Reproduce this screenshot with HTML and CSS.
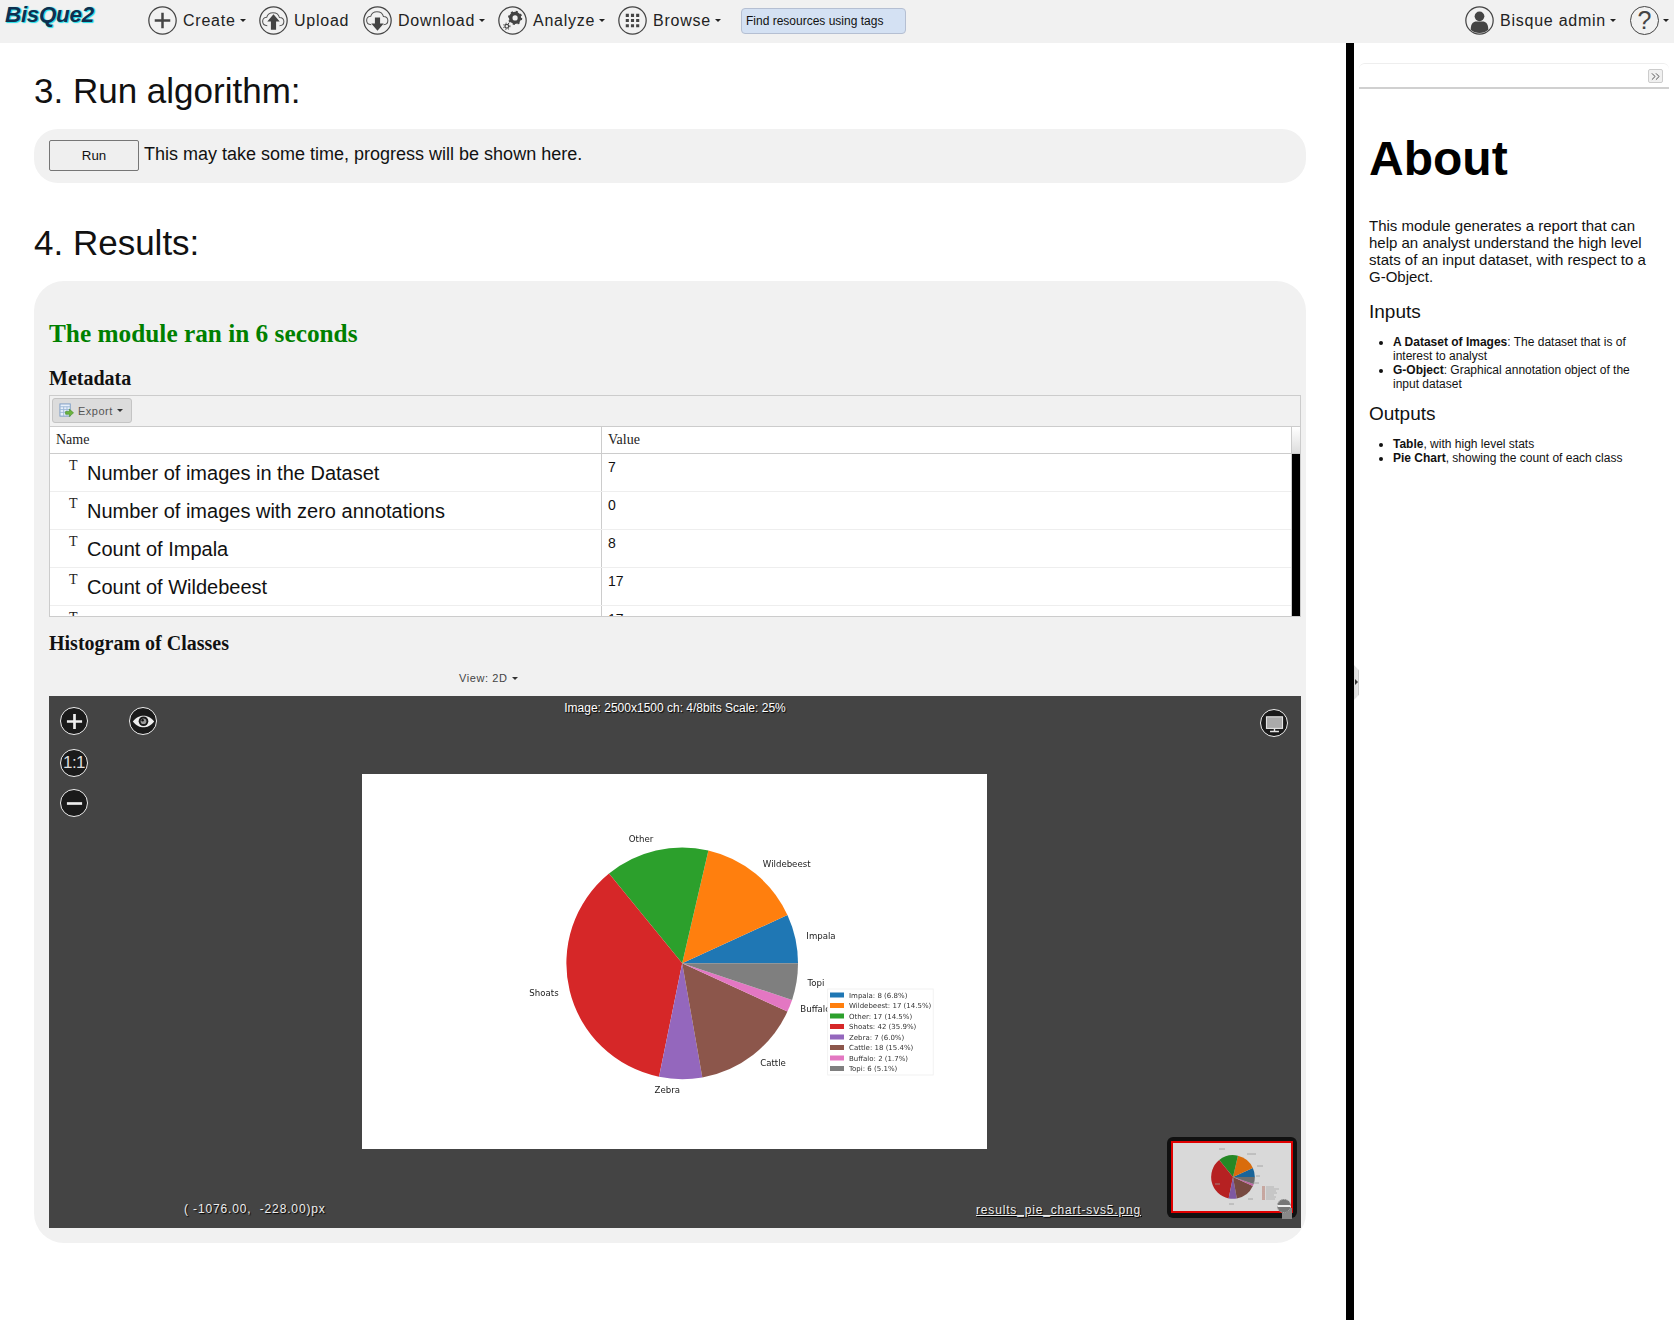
FILE: index.html
```html
<!DOCTYPE html>
<html lang="en">
<head>
<meta charset="utf-8">
<title>BisQue2 - Run algorithm</title>
<link rel="stylesheet" href="styles.css">
</head>
<body>
<header class="topbar">
  <a class="logo">BisQue2</a>
  <nav class="nav">
    <a class="nav-item item-create">
      <svg class="nav-icon" viewBox="0 0 28 28"><circle cx="14" cy="14" r="13.2" class="ring"/><path d="M14 6.500v15M6.500 14h15" class="thick"/></svg>
      <span>Create</span><i class="caret"></i>
    </a>
    <a class="nav-item item-upload">
      <svg class="nav-icon" viewBox="0 0 28 28"><circle cx="14" cy="14" r="13.2" class="ring"/><path d="M8 19c-3 0-4.500-2-4.500-4.200 0-2.300 1.800-4 4-4 .8-2.800 3.300-4.300 6-4.300 3.200 0 5.600 2 6.200 4.600 2.300.1 4.300 1.500 4.300 3.900 0 2.300-1.700 4-4.200 4" class="thin"/><path d="M14 8l6 7h-3.500v8h-5v-8H8z" class="solid"/></svg>
      <span>Upload</span>
    </a>
    <a class="nav-item item-download">
      <svg class="nav-icon" viewBox="0 0 28 28"><circle cx="14" cy="14" r="13.2" class="ring"/><path d="M8 18c-3 0-4.500-2-4.500-4.200 0-2.300 1.800-4 4-4 .8-2.800 3.300-4.300 6-4.300 3.200 0 5.600 2 6.200 4.600 2.300.1 4.300 1.500 4.300 3.900 0 2.300-1.700 4-4.200 4" class="thin"/><path d="M14 24l6-7h-3.500v-6h-5v6H8z" class="solid"/></svg>
      <span>Download</span><i class="caret"></i>
    </a>
    <a class="nav-item item-analyze">
      <svg class="nav-icon" viewBox="0 0 28 28"><circle cx="14" cy="14" r="13.2" class="ring"/><circle cx="16.500" cy="11.500" r="4.200" class="gear"/><circle cx="16.500" cy="11.500" r="6" class="gear-teeth"/><circle cx="8.500" cy="19.500" r="1.800" class="gear-small"/><circle cx="8.500" cy="19.500" r="3" class="gear-teeth-small"/></svg>
      <span>Analyze</span><i class="caret"></i>
    </a>
    <a class="nav-item item-browse">
      <svg class="nav-icon" viewBox="0 0 28 28"><circle cx="14" cy="14" r="13.2" class="ring"/><path d="M7.500 7.500h3v3h-3zM12.500 7.500h3v3h-3zM17.500 7.500h3v3h-3zM7.500 12.500h3v3h-3zM12.500 12.500h3v3h-3zM17.500 12.500h3v3h-3zM7.500 17.500h3v3h-3zM12.500 17.500h3v3h-3zM17.500 17.500h3v3h-3z" class="solid"/></svg>
      <span>Browse</span><i class="caret"></i>
    </a>
    <div class="search">Find resources using tags</div>
  </nav>
  <div class="nav-right">
    <a class="nav-item item-user">
      <svg class="nav-icon" viewBox="0 0 28 28"><circle cx="14" cy="14" r="13.2" class="ring"/><circle cx="14" cy="10" r="4.700" class="solid"/><path d="M5.500 23c0-6 2.500-8 5.500-8h6c3 0 5.500 2 5.500 8a13 13 0 0 1-17 0z" class="solid"/></svg>
      <span>Bisque admin</span><i class="caret"></i>
    </a>
    <a class="nav-item item-help">
      <span class="help-ring">?</span><i class="caret"></i>
    </a>
  </div>
</header>

<div class="layout">
  <main class="content">
    <h2 class="step step-run">3. Run algorithm:</h2>
    <section class="run-panel">
      <button class="run-btn">Run</button>
      <span class="run-note">This may take some time, progress will be shown here.</span>
    </section>

    <h2 class="step step-results">4. Results:</h2>
    <section class="results-panel">
      <h3 class="success">The module ran in 6 seconds</h3>
      <h4 class="sub sub-meta">Metadata</h4>

      <div class="grid">
        <div class="grid-toolbar">
          <button class="export-btn">
            <svg class="export-icon" viewBox="0 0 16 16"><rect x="1" y="1" width="11" height="13" fill="#e8f0fa" stroke="#7c9cc4"/><path d="M1 4h11M1 7h11M1 10h11M5 4v10M8.500 4v10" stroke="#9db7d6" fill="none"/><path d="M7 9h4V6.500l4.500 4-4.500 4V12H7z" fill="#6cb33f" stroke="#3f8a20" stroke-width=".6"/></svg>
            <span>Export</span><i class="caret caret-dark"></i>
          </button>
        </div>
        <div class="grid-head">
          <div class="cell-head col-name">Name</div>
          <div class="cell-head col-value">Value</div>
          <div class="head-scroll"></div>
        </div>
        <div class="grid-body">
          <div class="rows">
            <div class="row"><div class="col-name cell-name"><span class="type">T</span><span class="name">Number of images in the Dataset</span></div><div class="col-value cell-value">7</div></div>
            <div class="row"><div class="col-name cell-name"><span class="type">T</span><span class="name">Number of images with zero annotations</span></div><div class="col-value cell-value">0</div></div>
            <div class="row"><div class="col-name cell-name"><span class="type">T</span><span class="name">Count of Impala</span></div><div class="col-value cell-value">8</div></div>
            <div class="row"><div class="col-name cell-name"><span class="type">T</span><span class="name">Count of Wildebeest</span></div><div class="col-value cell-value">17</div></div>
            <div class="row"><div class="col-name cell-name"><span class="type">T</span><span class="name">Count of Other</span></div><div class="col-value cell-value">17</div></div>
          </div>
          <div class="scrollbar"></div>
        </div>
      </div>

      <h4 class="sub sub-hist">Histogram of Classes</h4>
      <div class="view-select">View: 2D<i class="caret caret-dark"></i></div>

      <div class="viewer">
        <div class="viewer-info">Image: 2500x1500 ch: 4/8bits Scale: 25%</div>

        <button class="tool tool-plus"><svg viewBox="0 0 28 28"><path d="M14 5.500v17M5.500 14h17" class="tool-stroke"/></svg></button>
        <button class="tool tool-eye"><svg viewBox="0 0 28 28"><path d="M2 14C6 9 10 7.500 14 7.500S22 9 26 14c-4 5-8 6.500-12 6.500S6 19 2 14z" fill="#eee"/><circle cx="14" cy="13.700" r="5.400" fill="#1a1a1a"/><circle cx="14" cy="13.700" r="3.200" fill="#999"/><circle cx="13" cy="12.500" r="1.400" fill="#111"/></svg></button>
        <button class="tool tool-fit">1:1</button>
        <button class="tool tool-minus"><svg viewBox="0 0 28 28"><path d="M5.500 14h17" class="tool-stroke"/></svg></button>
        <button class="tool tool-screen"><svg viewBox="0 0 28 28"><rect x="5" y="6.500" width="18" height="13" fill="#aaa" stroke="#e4e4e4" stroke-width="1.200"/><path d="M14 19.500v3M9 23h10" stroke="#e4e4e4" stroke-width="1.600" fill="none"/></svg></button>

        <svg class="chart" viewBox="0 0 625 375">
          <defs>
            <g id="pie">
              <path d="M0 0H115A115 115 0 0 0 104.500-47.900Z" fill="#1f77b4"/>
              <path d="M0 0L104.500-47.900A115 115 0 0 0 26-112Z" fill="#ff7f0e"/>
              <path d="M0 0L26-112A115 115 0 0 0-72.700-89.100Z" fill="#2ca02c"/>
              <path d="M0 0L-72.700-89.100A115 115 0 0 0-23 112.700Z" fill="#d62728"/>
              <path d="M0 0L-23 112.700A115 115 0 0 0 20 113.300Z" fill="#9467bd"/>
              <path d="M0 0L20 113.300A115 115 0 0 0 104.500 47.900Z" fill="#8c564b"/>
              <path d="M0 0L104.500 47.900A115 115 0 0 0 109.100 36.400Z" fill="#e377c2"/>
              <path d="M0 0L109.100 36.400A115 115 0 0 0 115 0Z" fill="#7f7f7f"/>
            </g>
          </defs>
          <g class="chart-soft">
            <use href="#pie" transform="translate(320.200 189.300) scale(1.007)"/>
            <text x="279" y="68" text-anchor="middle" class="label">Other</text>
            <text x="424.700" y="93.300" text-anchor="middle" class="label">Wildebeest</text>
            <text x="459" y="164.700" text-anchor="middle" class="label">Impala</text>
            <text x="454" y="212" text-anchor="middle" class="label">Topi</text>
            <text x="438.300" y="238.300" class="label">Buffalo</text>
            <text x="411" y="292.300" text-anchor="middle" class="label">Cattle</text>
            <text x="305.300" y="318.700" text-anchor="middle" class="label">Zebra</text>
            <text x="182" y="222.300" text-anchor="middle" class="label">Shoats</text>
            <rect x="465.700" y="215" width="105.500" height="86" fill="#fff" stroke="#eee" stroke-width=".8"/>
            <rect x="468" y="218.500" width="14" height="5" fill="#1f77b4"/><text x="487" y="223.800" class="legend">Impala: 8 (6.8%)</text>
            <rect x="468" y="229" width="14" height="5" fill="#ff7f0e"/><text x="487" y="234.300" class="legend">Wildebeest: 17 (14.5%)</text>
            <rect x="468" y="239.500" width="14" height="5" fill="#2ca02c"/><text x="487" y="244.800" class="legend">Other: 17 (14.5%)</text>
            <rect x="468" y="250" width="14" height="5" fill="#d62728"/><text x="487" y="255.300" class="legend">Shoats: 42 (35.9%)</text>
            <rect x="468" y="260.500" width="14" height="5" fill="#9467bd"/><text x="487" y="265.800" class="legend">Zebra: 7 (6.0%)</text>
            <rect x="468" y="271" width="14" height="5" fill="#8c564b"/><text x="487" y="276.300" class="legend">Cattle: 18 (15.4%)</text>
            <rect x="468" y="281.500" width="14" height="5" fill="#e377c2"/><text x="487" y="286.800" class="legend">Buffalo: 2 (1.7%)</text>
            <rect x="468" y="292" width="14" height="5" fill="#7f7f7f"/><text x="487" y="297.300" class="legend">Topi: 6 (5.1%)</text>
          </g>
        </svg>

        <div class="coords">( -1076.00,&nbsp; -228.00)px</div>
        <a class="filename">results_pie_chart-svs5.png</a>

        <div class="thumb">
          <svg class="thumb-img" viewBox="0 0 118 68">
            <rect width="118" height="68" fill="#d9d9d9"/>
            <g class="thumb-pie"><use href="#pie" transform="translate(60 34) scale(.19)"/></g>
            <path d="M46 6h6M74 11h9M84 23h6M83 33h4M80 40h6M42 41h5M75 56h5M56 61h5" stroke="#999" stroke-width=".8" fill="none"/>
            <path d="M89 44h3M89 46h3M89 48h3M89 50h3M89 52h3M89 54h3M89 56h3" stroke="#b06a5a" stroke-width=".9" fill="none"/>
            <path d="M93 44h8M93 46h13M93 48h10M93 50h11M93 52h8M93 54h10M93 56h9" stroke="#aaa" stroke-width=".8" fill="none"/>
          </svg>
          <span class="thumb-handle"></span>
          <span class="thumb-knob"></span>
        </div>
      </div>
    </section>
  </main>

  <aside class="side">
    <span class="splitter"></span>
    <div class="side-head">
      <span class="collapse"><svg viewBox="0 0 12 10"><path d="M2 1.500L5.500 5 2 8.500M6.500 1.500L10 5 6.500 8.500" fill="none" stroke="#555" stroke-width="1.100"/></svg></span>
    </div>
    <div class="about">
      <h1>About</h1>
      <p>This module generates a report that can help an analyst understand the high level stats of an input dataset, with respect to a G-Object.</p>
      <h3>Inputs</h3>
      <ul>
        <li><b>A Dataset of Images</b>: The dataset that is of interest to analyst</li>
        <li><b>G-Object</b>: Graphical annotation object of the input dataset</li>
      </ul>
      <h3 class="outputs">Outputs</h3>
      <ul>
        <li><b>Table</b>, with high level stats</li>
        <li><b>Pie Chart</b>, showing the count of each class</li>
      </ul>
    </div>
  </aside>
</div>
</body>
</html>
```
FILE: styles.css
```css
* { box-sizing: border-box; }
html, body { margin: 0; padding: 0; height: 100%; overflow: hidden; }
body { font-family: "Liberation Sans", Arial, sans-serif; color: #000; background: #fff; display: flex; flex-direction: column; }

.topbar { height: 43px; flex: none; background: #f1f1f1; display: flex; align-items: center; padding: 0 5px 2px 0; }
.logo { width: 148px; padding-left: 5px; margin-top: -11px; font-size: 22.500px; font-weight: bold; font-style: italic; letter-spacing: -0.35px; color: #0f2f4f; text-shadow: 1px 0 1px #1ee0e8, 1px 1px 1px #1ee0e8; }
.nav { display: flex; align-items: center; }
.nav-right { margin-left: auto; display: flex; align-items: center; }
.nav-item { display: flex; align-items: center; font-size: 16px; letter-spacing: 0.75px; color: #222; }
.nav-icon { width: 29px; height: 29px; margin-right: 6px; flex: none; }
.item-create { width: 111px; }
.item-upload { width: 104px; }
.item-download { width: 135px; }
.item-analyze { width: 120px; }
.item-browse { width: 123px; }
.item-user { margin-right: 14px; }
.ring { fill: none; stroke: #444; stroke-width: 1.2; }
.thick { fill: none; stroke: #444; stroke-width: 2.4; }
.thin { fill: none; stroke: #555; stroke-width: 1; }
.solid { fill: #444; }
.gear { fill: none; stroke: #444; stroke-width: 3.4; }
.gear-teeth { fill: none; stroke: #444; stroke-width: 1.8; stroke-dasharray: 2 2.700; }
.gear-small { fill: none; stroke: #444; stroke-width: 1.2; }
.gear-teeth-small { fill: none; stroke: #444; stroke-width: 1; stroke-dasharray: 1 1.500; }
.caret { display: inline-block; width: 0; height: 0; margin-left: 4px; border-left: 3px solid transparent; border-right: 3px solid transparent; border-top: 3.500px solid #222; }
.caret-dark { border-top-color: #333; }
.help-ring { width: 29px; height: 29px; border: 1.3px solid #444; border-radius: 50%; display: flex; align-items: center; justify-content: center; font-size: 25px; letter-spacing: 0; color: #444; }
.search { width: 165px; height: 26px; padding-left: 4px; background: #d4e1f3; border: 1px solid #b5bfd2; border-radius: 4px; font-size: 12px; line-height: 24px; color: #111; }

.layout { flex: 1; display: flex; min-height: 0; }
.content { width: 1346px; flex: none; padding: 0 40px 0 34px; overflow: hidden; }
.step { margin: 0; font-size: 35px; font-weight: normal; line-height: 40px; color: #111; }
.step-run { margin-top: 28px; margin-bottom: 18px; }
.step-results { margin-top: 40px; margin-bottom: 18px; }

.run-panel { height: 54px; background: #f1f1f1; border-radius: 24px; padding: 11px 15px; display: flex; align-items: flex-start; }
.run-btn { width: 90px; height: 31px; background: #efefef; border: 1px solid #767676; border-radius: 2px; font: 13.3px "Liberation Sans", Arial, sans-serif; color: #111; padding: 0; }
.run-note { margin-left: 5px; font-size: 18px; line-height: 29px; color: #111; }

.results-panel { height: 962px; background: #f1f1f1; border-radius: 30px; padding: 38px 5px 15px 15px; }
.success { margin: 0; font-family: "Liberation Serif", "Times New Roman", serif; font-size: 25.300px; line-height: 28px; font-weight: bold; color: #008000; }
.sub { margin: 0; font-family: "Liberation Serif", "Times New Roman", serif; font-size: 20px; line-height: 24px; font-weight: bold; color: #111; }
.sub-meta { margin-top: 19px; margin-bottom: 5px; }
.sub-hist { margin-top: 14px; }

.grid { height: 222px; border: 1px solid #ccc; background: #fff; display: flex; flex-direction: column; overflow: hidden; }
.grid-toolbar { height: 31px; flex: none; background: #f1f1f1; border-bottom: 1px solid #ccc; padding: 2px; }
.export-btn { height: 25px; width: 80px; padding: 0 0 0 6px; display: flex; align-items: center; background: #dcdcdc; border: 1px solid #c4c4c4; border-radius: 3px; font: 11px "Liberation Sans", Arial, sans-serif; letter-spacing: 0.5px; color: #555; }
.export-icon { width: 15px; height: 15px; margin-right: 4px; }
.grid-head { height: 27px; flex: none; display: flex; border-bottom: 1px solid #ccc; font-family: "Liberation Serif", "Times New Roman", serif; font-size: 14px; color: #222; }
.col-name { width: 552px; flex: none; border-right: 1px solid #ccc; }
.col-value { flex: 1; padding-left: 6px; }
.cell-head { padding-left: 6px; line-height: 25px; }
.head-scroll { width: 9px; flex: none; border-left: 1px solid #ccc; background: linear-gradient(#fff, #ddd); }
.grid-body { flex: 1; min-height: 0; display: flex; overflow: hidden; }
.rows { flex: 1; min-width: 0; }
.row { height: 38px; display: flex; border-bottom: 1px solid #eee; }
.cell-name { display: flex; padding-left: 19px; }
.type { font-family: "Liberation Serif", "Times New Roman", serif; font-size: 14px; line-height: 16px; margin-top: 4px; width: 18px; flex: none; color: #222; }
.name { font-size: 20px; line-height: 23px; margin-top: 8px; color: #111; }
.cell-value { font-size: 14px; line-height: 16px; padding-top: 5px; color: #111; }
.scrollbar { width: 9px; flex: none; background: #000; border-left: 1px solid #ccc; }

.view-select { margin-top: 15px; margin-bottom: 10px; padding-left: 410px; font-size: 11px; line-height: 16px; letter-spacing: 0.6px; color: #444; display: flex; align-items: center; }

.viewer { position: relative; height: 532px; background: #444; overflow: hidden; }
.viewer-info { position: absolute; left: 0; right: 0; top: 4px; text-align: center; font-size: 12px; line-height: 16px; color: #fff; text-shadow: 1px 1px 1px #000; }
.tool { position: absolute; width: 28px; height: 28px; padding: 0; background: #1a1a1a; border: 1.5px solid #eee; border-radius: 50%; color: #ddd; display: flex; align-items: center; justify-content: center; }
.tool svg { width: 25px; height: 25px; }
.tool-stroke { fill: none; stroke: #eee; stroke-width: 3; }
.tool-plus { left: 11px; top: 11px; }
.tool-eye { left: 80px; top: 11px; }
.tool-fit { left: 11px; top: 53px; font: 17px "Liberation Sans", Arial, sans-serif; letter-spacing: -0.5px; }
.tool-minus { left: 11px; top: 93px; }
.tool-screen { left: 1211px; top: 13px; }
.chart { position: absolute; left: 313px; top: 78px; width: 625px; height: 375px; background: #fff; }
.chart-soft { filter: blur(0.25px); }
.label { font-family: "DejaVu Sans", sans-serif; font-size: 8.6px; fill: #222; }
.legend { font-family: "DejaVu Sans", sans-serif; font-size: 7px; fill: #333; }
.coords { position: absolute; left: 135px; top: 505px; font-size: 12px; line-height: 16px; letter-spacing: 0.85px; color: #eee; text-shadow: 1px 1px 1px #000; }
.filename { position: absolute; left: 927px; top: 506px; font-size: 12px; line-height: 16px; letter-spacing: 0.83px; color: #eee; text-decoration: underline; text-shadow: 1px 1px 1px #000; }
.thumb { position: absolute; left: 1118px; top: 441px; width: 130px; height: 81px; background: #111; border-radius: 6px; padding: 4px; }
.thumb-img { display: block; width: 122px; height: 72px; border: 2px solid #e00000; }
.thumb-pie { filter: brightness(0.85); }
.thumb-knob { position: absolute; left: 110px; top: 62px; width: 14px; height: 14px; border-radius: 50%; background: linear-gradient(#777 0 40%, #eee 40% 60%, #777 60%); border: 1px dotted #aaa; }
.thumb-handle { position: absolute; left: 115px; top: 71px; width: 10px; height: 11px; background: #888; }

.side { position: relative; flex: 1; min-width: 0; border-left: 8px solid #000; padding: 20px 5px 0 5px; }
.splitter { position: absolute; left: 0; top: 622px; width: 5px; height: 35px; background: linear-gradient(90deg, #ddd, #e8e8e8); border-right: 1px solid #ccc; clip-path: polygon(0 0, 100% 15%, 100% 85%, 0 100%); }
.splitter::after { content: ""; position: absolute; left: 1px; top: 14px; border-left: 3px solid #333; border-top: 3px solid transparent; border-bottom: 3px solid transparent; }
.side-head { height: 26px; border-top: 1px solid #eee; border-bottom: 2px solid #d0d0d0; border-radius: 6px 6px 0 0; display: flex; justify-content: flex-end; align-items: flex-start; padding: 5px 6px 0 0; }
.collapse { width: 15px; height: 14px; border: 1px solid #ccc; border-radius: 2px; background: #f0f0f0; display: flex; align-items: center; justify-content: center; }
.collapse svg { width: 11px; height: 9px; }
.about { padding: 0 21px 0 10px; }
.about h1 { margin: 42px 0 0; font-size: 48px; line-height: 55px; font-weight: bold; color: #000; }
.about p { margin: 31px 0 0; font-size: 15px; line-height: 17px; color: #111; }
.about h3 { margin: 16px 0 0; font-size: 19px; line-height: 22px; font-weight: normal; color: #111; }
.about h3.outputs { margin-top: 12px; }
.about ul { margin: 12px 0 0; padding-left: 24px; font-size: 12px; line-height: 14px; color: #111; }
```
